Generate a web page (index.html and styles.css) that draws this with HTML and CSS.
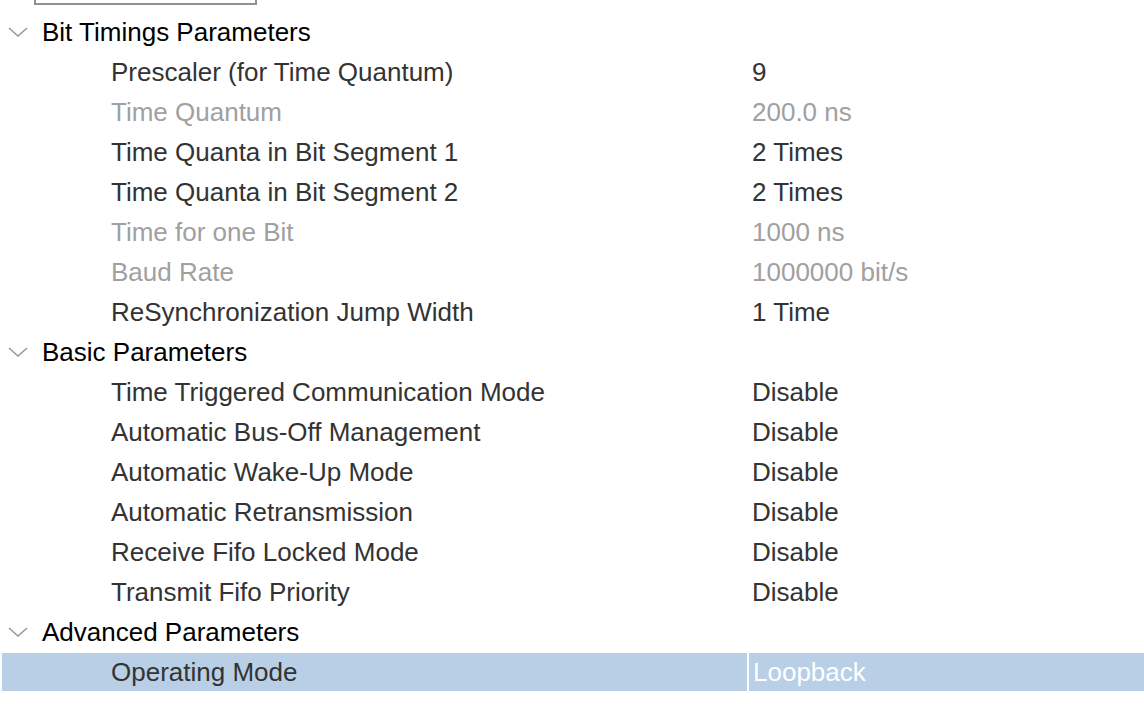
FILE: index.html
```html
<!DOCTYPE html>
<html>
	<head>
		<meta charset="UTF-8">
		<title>Parameter Settings</title>
		<link rel="stylesheet" href="styles.css">
	</head>
	<body>
		<!--上方的输入框(被裁掉)-->
		<div class="topbox"></div>

		<div class="tree">
			<!--Bit Timings-->
			<div class="row group">
				<span class="name"><svg class="chev" viewBox="0 0 20 10"><polyline points="1,1 10,9 19,1"/></svg>Bit Timings Parameters</span>
			</div>
			<div class="row">
				<span class="name">Prescaler (for Time Quantum)</span>
				<span class="val">9</span>
			</div>
			<div class="row off">
				<span class="name">Time Quantum</span>
				<span class="val">200.0 ns</span>
			</div>
			<div class="row">
				<span class="name">Time Quanta in Bit Segment 1</span>
				<span class="val">2 Times</span>
			</div>
			<div class="row">
				<span class="name">Time Quanta in Bit Segment 2</span>
				<span class="val">2 Times</span>
			</div>
			<div class="row off">
				<span class="name">Time for one Bit</span>
				<span class="val">1000 ns</span>
			</div>
			<div class="row off">
				<span class="name">Baud Rate</span>
				<span class="val">1000000 bit/s</span>
			</div>
			<div class="row">
				<span class="name">ReSynchronization Jump Width</span>
				<span class="val">1 Time</span>
			</div>

			<!--Basic-->
			<div class="row group">
				<span class="name"><svg class="chev" viewBox="0 0 20 10"><polyline points="1,1 10,9 19,1"/></svg>Basic Parameters</span>
			</div>
			<div class="row">
				<span class="name">Time Triggered Communication Mode</span>
				<span class="val">Disable</span>
			</div>
			<div class="row">
				<span class="name">Automatic Bus-Off Management</span>
				<span class="val">Disable</span>
			</div>
			<div class="row">
				<span class="name">Automatic Wake-Up Mode</span>
				<span class="val">Disable</span>
			</div>
			<div class="row">
				<span class="name">Automatic Retransmission</span>
				<span class="val">Disable</span>
			</div>
			<div class="row">
				<span class="name">Receive Fifo Locked Mode</span>
				<span class="val">Disable</span>
			</div>
			<div class="row">
				<span class="name">Transmit Fifo Priority</span>
				<span class="val">Disable</span>
			</div>

			<!--Advanced-->
			<div class="row group">
				<span class="name"><svg class="chev" viewBox="0 0 20 10"><polyline points="1,1 10,9 19,1"/></svg>Advanced Parameters</span>
			</div>
			<div class="row selected">
				<span class="name">Operating Mode</span>
				<span class="val">Loopback</span>
			</div>
		</div>
	</body>
</html>
```

FILE: styles.css
```css
body{
	margin: 0;
	background: #fff;
	font-family: "Liberation Sans", Arial, sans-serif;
	font-size: 26px;
	color: #333;
	overflow: hidden;
}
.topbox{
	margin-left: 34px;
	width: 219px;
	height: 3px;
	border: 2px solid #8c9197;
	border-top: none;
}
.tree{
	margin-top: 7px;
}
.row{
	display: grid;
	grid-template-columns: 747px 1fr;
	column-gap: 2px;
	height: 40px;
	align-items: center;
	white-space: nowrap;
}
.name{
	padding-left: 111px;
}
.val{
	padding-left: 3px;
}
.group .name{
	display: flex;
	align-items: center;
	padding-left: 8px;
	color: #000;
}
.chev{
	width: 20px;
	height: 10px;
	margin-right: 14px;
	fill: none;
	stroke: #9a9a9a;
	stroke-width: 1.6;
}
.off{
	color: #a0a0a0;
}
.selected{
	grid-template-columns: 745px 1fr;
	margin-left: 2px;
	height: 38px;
	margin-top: 1px;
}
.selected .name,
.selected .val{
	background: #b8cfe5;
	height: 100%;
	display: flex;
	align-items: center;
}
.selected .name{
	padding-left: 109px;
}
.selected .val{
	padding-left: 4px;
	color: #fff;
}
```
